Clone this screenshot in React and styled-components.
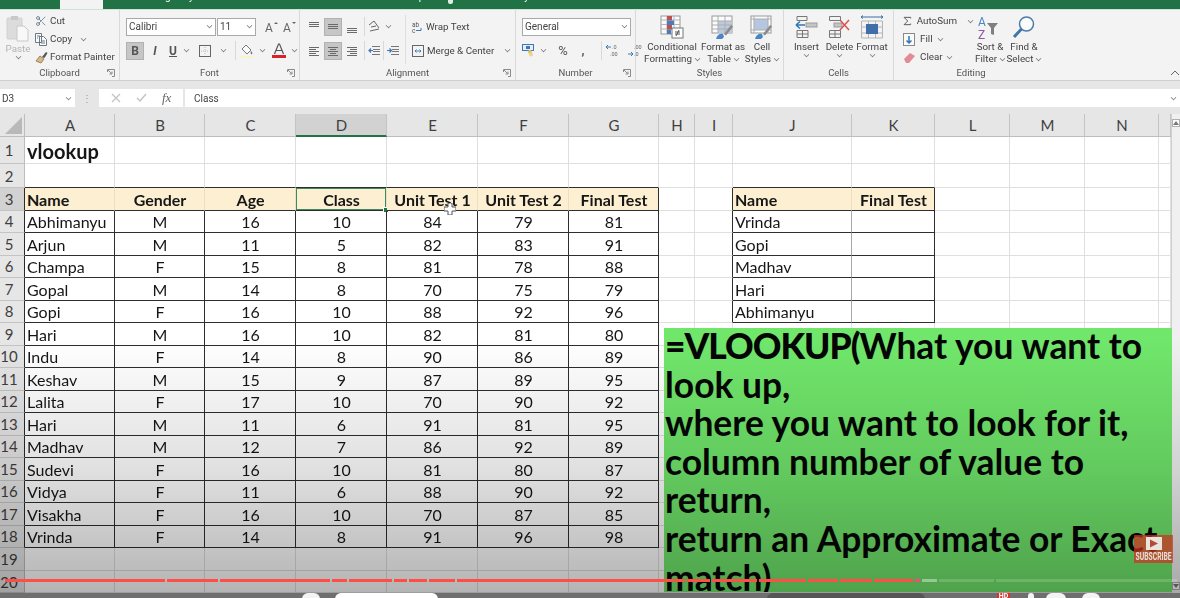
import React from "react";
import styled, { createGlobalStyle } from "styled-components";
import { Scissors } from "lucide-react";

const GlobalStyle = createGlobalStyle`
	html, body {
		margin: 0;
		padding: 0;
		background: #ffffff;
		overflow: hidden;
	}
`;

const Page = styled.div`
	position: relative;
	width: 1180px;
	height: 598px;
	overflow: hidden;
	font-family: Roboto, "Liberation Sans", sans-serif;
	color: #444444;
	filter: blur(0.35px);
`;

/* green title strip, video crop cuts the top of it */
const TabBar = styled.div`
	height: 9px;
	background: #217346;
	display: flex;
	align-items: flex-end;
	overflow: hidden;
	padding-left: 10px;
	font-size: 10px;
	line-height: 14px;
	color: #ffffff;
`;

const Tab = styled.div`
	flex: none;
	margin-right: ${(p) => p.$gap || 16}px;
	padding-bottom: 5px;
	white-space: nowrap;
`;

const ActiveTab = styled(Tab)`
	margin: 0 9px 0 18px;
	padding: 0 8px 5px;
	background: #f3f3f3;
	color: #217346;
`;

const ShareTab = styled(Tab)`
	margin-left: auto;
	margin-right: 12px;
`;

const TabGlyph = styled.div`
	flex: none;
	width: 5px;
	height: 4px;
	margin: 0 ${(p) => p.$mr}px 5px 0;
	background: #dfeee5;
	border-radius: 0 0 2px 2px;
`;

const Ribbon = styled.div`
	height: 71px;
	background: #f3f3f3;
	border-top: 1px solid #cfe3d6;
	box-sizing: border-box;
	display: flex;
	position: relative;
	font-size: 9.8px;
	line-height: 12px;
`;

const Group = styled.div`
	flex: none;
	width: ${(p) => p.$w}px;
	box-sizing: border-box;
	display: flex;
	flex-direction: column;
	border-right: ${(p) => (p.$last ? "none" : "1px solid #d9d9d9")};
`;

const GroupBody = styled.div`
	flex: 1;
	display: flex;
	min-height: 0;
	padding-left: ${(p) => p.$pl || 0}px;
`;

const GroupLabel = styled.div`
	position: relative;
	height: 13px;
	margin-bottom: 1px;
	line-height: 13px;
	text-align: center;
	font-size: 9.5px;
	color: #555555;
`;

const Launcher = styled.svg`
	position: absolute;
	right: 4px;
	top: 3px;
`;

const Stack = styled.div`
	flex: none;
	width: ${(p) => (p.$w ? `${p.$w}px` : "auto")};
	display: flex;
	flex-direction: column;
	padding-top: ${(p) => p.$pt ?? 2}px;
`;

const SmallRow = styled.div`
	height: 18px;
	display: flex;
	align-items: center;
	gap: ${(p) => p.$gap ?? 4}px;
	white-space: nowrap;
`;

const ToolRows = styled.div`
	flex: none;
	width: ${(p) => (p.$w ? `${p.$w}px` : "auto")};
	display: flex;
	flex-direction: column;
	gap: 5px;
	padding-top: 7px;
`;

const ToolRow = styled.div`
	height: 19px;
	display: flex;
	align-items: center;
	gap: ${(p) => p.$gap ?? 0}px;
	white-space: nowrap;
`;

const Paste = styled.div`
	width: 30px;
	display: flex;
	flex-direction: column;
	align-items: center;
	padding-top: 5px;
	color: #b5b5b5;
	margin-right: 2px;
`;

const Select = styled.div`
	width: ${(p) => p.$w}px;
	height: 18px;
	margin-right: ${(p) => p.$mr || 0}px;
	box-sizing: border-box;
	background: #ffffff;
	border: 1px solid #a9a9a9;
	display: flex;
	align-items: center;
	justify-content: space-between;
	padding: 0 3px 0 2px;
	font-size: 10px;
`;

const IconButton = styled.div`
	flex: none;
	width: ${(p) => p.$w || 18}px;
	height: 18px;
	margin-right: ${(p) => p.$mr || 0}px;
	display: flex;
	align-items: center;
	justify-content: center;
	font-size: ${(p) => p.$size || 12}px;
	font-weight: ${(p) => (p.$bold ? 700 : 400)};
	font-style: ${(p) => (p.$italic ? "italic" : "normal")};
	text-decoration: ${(p) => (p.$under ? "underline" : "none")};
	color: #555555;
	background: ${(p) => (p.$on ? "#c6c6c6" : "transparent")};
	box-shadow: ${(p) => (p.$on ? "inset 0 0 0 1px #b2b2b2" : "none")};
`;

const Divider = styled.div`
	width: 1px;
	height: ${(p) => p.$h || 19}px;
	background: #d9d9d9;
	flex: none;
	margin: 0 ${(p) => p.$m || 5}px;
`;

const ThinDivider = styled.div`
	width: 1px;
	flex: none;
	align-self: stretch;
	margin: 5px ${(p) => p.$mr || 6}px 2px ${(p) => p.$ml || 0}px;
	background: #dedede;
`;

const BigButton = styled.div`
	flex: none;
	width: ${(p) => p.$w}px;
	display: flex;
	flex-direction: column;
	align-items: center;
	text-align: center;
	padding-top: 5px;
	white-space: nowrap;
`;

const BigIcon = styled.div`
	height: 26px;
	display: flex;
	align-items: flex-start;
	justify-content: center;
`;

const Caret = styled.span`
	display: inline-block;
	margin-left: ${(p) => p.$ml ?? 3}px;
	margin-right: ${(p) => p.$mr || 0}px;
	width: 4px;
	height: 4px;
	flex: none;
	border-right: 1px solid #777777;
	border-bottom: 1px solid #777777;
	transform: translateY(-1px) rotate(45deg) scale(0.8);
`;

const Collapse = styled.svg`
	position: absolute;
	right: 0;
	bottom: 3px;
`;

const FormulaStrip = styled.div`
	height: 34px;
	box-sizing: border-box;
	padding-top: 8px;
	background: #e6e6e6;
	border-top: 1px solid #cfcfcf;
	display: flex;
	align-items: flex-start;
	gap: 2px;
	font-size: 10px;
`;

const NameBox = styled.div`
	width: 75px;
	height: 18px;
	box-sizing: border-box;
	padding: 0 4px 0 2px;
	background: #ffffff;
	display: flex;
	align-items: center;
	justify-content: space-between;
`;

const Grip = styled.div`
	width: 20px;
	height: 18px;
	display: flex;
	align-items: center;
	justify-content: center;
	color: #9a9a9a;
	font-size: 10px;
`;

const FormulaTools = styled.div`
	width: 84px;
	height: 18px;
	background: #ffffff;
	display: flex;
	align-items: center;
	justify-content: space-around;
	padding: 0 4px;
	box-sizing: border-box;
	color: #666666;
`;

const Fx = styled.span`
	font-family: "Liberation Serif", serif;
	font-style: italic;
	font-size: 13px;
`;

const FormulaInput = styled.div`
	flex: 1;
	height: 18px;
	background: #ffffff;
	display: flex;
	align-items: center;
	justify-content: space-between;
	padding: 0 4px 0 9px;
`;

const Sheet = styled.div`
	display: grid;
	grid-template-columns: 25px 90px 90px 91px 91px 91px 91px 90px 36px 38px 119px 83px 75px 75px 74px 12px 9px;
	grid-template-rows: 23px 27px 24px repeat(16, 22.5px) 23px 22px;
	font-family: Lato, "Liberation Sans", sans-serif;
	color: #161616;
	background: #ffffff;
`;

const Corner = styled.div`
	background: #e6e6e6;
	border-bottom: 1px solid #bdbdbd;
	border-right: 1px solid #bdbdbd;
	box-sizing: border-box;
	display: flex;
	align-items: flex-end;
	justify-content: flex-end;
	padding: 0 2px 2px 0;
`;

const ColHead = styled.div`
	box-sizing: border-box;
	display: flex;
	align-items: center;
	justify-content: center;
	padding-left: 1px;
	font-size: 15px;
	color: #3f3f3f;
	background: ${(p) => (p.$on ? "#d2d2d2" : "#e6e6e6")};
	border-right: 1px solid #c4c4c4;
	border-bottom: ${(p) => (p.$on ? "2px solid #217346" : "1px solid #bdbdbd")};
`;

const RowHead = styled.div`
	box-sizing: border-box;
	display: flex;
	align-items: center;
	justify-content: center;
	padding-right: 6px;
	font-size: 15px;
	color: #3f3f3f;
	background: ${(p) => (p.$on ? "#d2d2d2" : "#e6e6e6")};
	border-bottom: 1px solid #c4c4c4;
	border-right: 1px solid ${(p) => (p.$dark ? "#2b2b2b" : "#bdbdbd")};
`;

const lineColor = { dark: "#2e2e2e", mid: "#a8a8a8", soft: "#eadfc0", grid: "#dfdfdf" };

const Cell = styled.div`
	position: relative;
	box-sizing: border-box;
	min-width: 0;
	display: flex;
	align-items: center;
	justify-content: ${(p) => (p.$center ? "center" : "flex-start")};
	padding-left: ${(p) => (p.$center ? 1 : 2)}px;
	padding-top: 1px;
	font-size: ${(p) => (p.$title ? 20 : 16)}px;
	font-weight: ${(p) => (p.$bold ? 700 : 400)};
	white-space: nowrap;
	background: ${(p) => (p.$fill ? "#fdf0d2" : "transparent")};
	border-right: 1px solid ${(p) => lineColor[p.$right]};
	border-bottom: 1px solid ${(p) => lineColor[p.$bottom]};
	box-shadow: ${(p) => (p.$selected ? "inset 0 0 0 1px #3e8a60" : "none")};

	&::after {
		content: "";
		display: ${(p) => (p.$selected ? "block" : "none")};
		position: absolute;
		right: -3px;
		bottom: -3px;
		width: 4px;
		height: 4px;
		background: #217346;
		border: 1px solid #ffffff;
	}
`;

const Scrollbar = styled.div`
	grid-column: 17;
	grid-row: 1 / -1;
	background: #f0f0f0;
	border-left: 1px solid #d0d0d0;
	display: flex;
	flex-direction: column;
	justify-content: space-between;
	align-items: center;
	padding: 5px 0 3px;
	box-sizing: border-box;
`;

const ArrowBox = styled.div`
	width: 8px;
	height: 8px;
	display: flex;
	align-items: center;
	justify-content: center;
	background: #ffffff;
	border: 1px solid #b0b0b0;
	box-sizing: border-box;
`;

const PlayerBottom = styled.div`
	position: relative;
	z-index: 1;
	height: 5px;
	background: #6f6f6f;
	display: flex;
	align-items: flex-start;
	overflow: hidden;
`;

const Knob = styled.div`
	flex: none;
	width: ${(p) => p.$w}px;
	height: 12px;
	margin-left: ${(p) => p.$ml}px;
	border-radius: 6px 6px 0 0;
	background: ${(p) => p.$bg};
`;

const SheetTabText = styled.div`
	flex: none;
	width: 300px;
`;

/* things that float over the grid */
const Shade = styled.div`
	position: absolute;
	left: 0;
	right: 0;
	top: 340px;
	bottom: 0;
	pointer-events: none;
	background: linear-gradient(to bottom, rgba(0, 0, 0, 0) 0%, rgba(0, 0, 0, 0.12) 50%, rgba(0, 0, 0, 0.3) 100%);
`;

const TextBox = styled.div`
	position: absolute;
	left: 664px;
	top: 328px;
	width: 508px;
	height: 264px;
	box-sizing: border-box;
	overflow: hidden;
	background: #70e66b;
	color: #050505;
	font-family: Lato, "Liberation Sans", sans-serif;
	font-weight: 700;
	font-size: 35.4px;
	line-height: 35px;
	padding-left: 1px;
	white-space: nowrap;
`;

const BoxLine = styled.div`
	height: 38.6px;
`;

const Heavy = styled.span`
	font-weight: 900;
	letter-spacing: -1px;
`;

const Progress = styled.div`
	position: absolute;
	z-index: 2;
	left: 5px;
	top: 579px;
	width: 1170px;
	height: 3px;
	display: flex;
	gap: 2px;
`;

const Segment = styled.div`
	flex: none;
	height: 3px;
	background: ${(p) => p.$c};
`;

const Subscribe = styled.div`
	position: absolute;
	z-index: 2;
	left: 1134px;
	top: 535px;
	width: 39px;
	height: 28px;
	box-sizing: border-box;
	background: rgba(205, 50, 35, 0.72);
	display: flex;
	flex-direction: column;
	align-items: center;
	padding-top: 2px;
	color: #e8e0d8;
	font-family: Roboto, "Liberation Sans", sans-serif;
	font-weight: 700;
	font-size: 8.5px;
	line-height: 12px;
`;

const SubscribeText = styled.span`
	display: block;
	transform: scale(0.8, 1.2);
`;

const HdBadge = styled.div`
	flex: none;
	margin-left: 72px;
	width: 13px;
	height: 5px;
	background: #d8342c;
	color: #ffffff;
	font: 700 7px/7px Roboto, sans-serif;
	text-align: center;
`;

const Pointer = styled.svg`
	position: absolute;
	left: 444px;
	top: 203px;
`;

function Launch() {
	return (
		<Launcher width="8" height="8" viewBox="0 0 8 8" fill="none" stroke="#8a8a8a">
			<path d="M.5 3V.5h7v7H5M1 1l4 4M5 2.5V5H2.5" />
		</Launcher>
	);
}

function PasteIcon() {
	return (
		<svg width="24" height="28" viewBox="0 0 24 28">
			<rect x="1" y="3" width="15" height="21" rx="1" fill="#dcdcdc" stroke="#d0d0d0" />
			<rect x="5" y="1" width="7" height="4" fill="#c9c9c9" />
			<path d="M11 11h7l4 4v11H11z" fill="#f8f8f8" stroke="#c8c8c8" />
		</svg>
	);
}

function CopyIcon() {
	return (
		<svg width="12" height="13" viewBox="0 0 12 13" fill="#fafafa" stroke="#6d7a86">
			<path d="M.5.5h6v9h-6zM4.5 3.5h4l3 3v6h-7z" />
			<path d="M2 3h3M2 5h1M6 8h4M6 10h4" />
		</svg>
	);
}

function PainterIcon() {
	return (
		<svg width="13" height="13" viewBox="0 0 13 13">
			<path d="M1 10l4-5 4 3-3 4z" fill="#d8b98a" stroke="#9a8460" />
			<path d="M7 6l4-5 1.5 1-3 5z" fill="#555555" />
		</svg>
	);
}

function FontSizeIcon({ down }) {
	return (
		<svg width="15" height="14" viewBox="0 0 15 14">
			<text x="1" y="12" fontFamily="Roboto" fontSize="12" fill="#666666">A</text>
			<path d={down ? "M10 2h4l-2 2z" : "M10 4h4l-2-2z"} fill="#666666" />
		</svg>
	);
}

function BordersIcon() {
	return (
		<svg width="12" height="12" viewBox="0 0 12 12" fill="none">
			<rect x=".5" y=".5" width="11" height="11" stroke="#666666" />
			<path d="M6 2v8M2 6h8" stroke="#bbbbbb" strokeDasharray="1 1" />
		</svg>
	);
}

function FillIcon() {
	return (
		<svg width="14" height="15" viewBox="0 0 14 15">
			<path d="M2 6l4-4 5 5-4 4z" fill="#fbfbfb" stroke="#777777" />
			<path d="M11 8c1 1 2 2 1 3s-2-1-1-3z" fill="#777777" />
			<rect x="1" y="13" width="12" height="2" fill="#fbf3c8" />
		</svg>
	);
}

function FontColorIcon() {
	return (
		<svg width="14" height="15" viewBox="0 0 14 15">
			<path d="M2.5 11L6.5 1h1l4 10M4 7.500h6" fill="none" stroke="#555555" strokeWidth="1.2" />
			<rect x="0" y="12" width="14" height="3" fill="#d8232a" />
		</svg>
	);
}

function AlignLines({ rows }) {
	return (
		<svg width="12" height="14" viewBox="0 0 12 14" stroke="#6a6a6a">
			{rows.map(([y, a, b]) => (
				<path key={y} d={`M${a} ${y}.5H${b}`} />
			))}
		</svg>
	);
}

const topLines = [[2, 1, 11], [4, 1, 11], [6, 1, 11]];
const midLines = [[4, 1, 11], [6, 1, 11], [8, 1, 11]];
const botLines = [[8, 1, 11], [10, 1, 11], [12, 1, 11]];
const leftLines = [[3, 1, 11], [5, 1, 8], [7, 1, 11], [9, 1, 8], [11, 1, 11]];
const centerLines = [[3, 1, 11], [5, 3, 9], [7, 1, 11], [9, 3, 9], [11, 1, 11]];
const rightLines = [[3, 1, 11], [5, 4, 11], [7, 1, 11], [9, 4, 11], [11, 1, 11]];

function OrientIcon() {
	return (
		<svg width="13" height="13" viewBox="0 0 13 13" fill="none" stroke="#666666">
			<path d="M1 5l5-4 5 7M3 7l5-1M2 11l9-2" />
		</svg>
	);
}

function IndentIcon({ right }) {
	return (
		<svg width="12" height="11" viewBox="0 0 12 11" fill="none" stroke="#777777">
			<path d="M4 1.500h8M5 4.500h7M5 6.500h7M4 9.500h8" />
			<path d={right ? "M0 5.500h4M2.500 3.500l2 2-2 2" : "M1 5.500h4M3 3.500l-2 2 2 2"} stroke="#3b78b8" strokeWidth="1.2" />
		</svg>
	);
}

function WrapIcon() {
	return (
		<svg width="10" height="12" viewBox="0 0 10 12">
			<text x="0" y="5.500" fontFamily="Roboto" fontSize="6.5" fill="#555555">ab</text>
			<text x="0" y="11.500" fontFamily="Roboto" fontSize="6.5" fill="#555555">c</text>
			<path d="M4 9.500h5V7" fill="none" stroke="#3b78b8" />
		</svg>
	);
}

function MergeIcon() {
	return (
		<svg width="12" height="12" viewBox="0 0 12 12" fill="none" stroke="#666666">
			<rect x=".5" y=".5" width="11" height="11" />
			<path d="M3 6h6M3 6l1.500-1.500M3 6l1.500 1.500M9 6L7.500 4.500M9 6L7.500 7.500" stroke="#4a7ebb" />
		</svg>
	);
}

function CurrencyIcon() {
	return (
		<svg width="13" height="13" viewBox="0 0 13 13">
			<rect x=".5" y=".5" width="11" height="6" fill="#e8eef6" stroke="#3b78b8" />
			<rect x="4" y="2" width="4" height="3" fill="#3b78b8" />
			<circle cx="8" cy="8" r="2" fill="#e8c36a" />
			<circle cx="9" cy="10.500" r="2" fill="#f0d48f" />
		</svg>
	);
}

function DecimalIcon({ inc }) {
	return (
		<svg width="14" height="13" viewBox="0 0 14 13" fontFamily="Roboto" fontSize="5.5" fill="#666666">
			<text x="6" y="5">{inc ? ".0" : ".00"}</text>
			<text x={inc ? 4 : 6} y="12">{inc ? ".00" : ".0"}</text>
			<path d={inc ? "M0 3h5M2 1L0 3l2 2" : "M0 10h5M3 8l2 2-2 2"} fill="none" stroke="#3b78b8" />
		</svg>
	);
}

function ConditionalIcon() {
	return (
		<svg width="24" height="24" viewBox="0 0 24 24">
			<rect x="1" y="1" width="19" height="18" fill="#fafafa" stroke="#9a9a9a" />
			<path d="M1 5h19M1 9.500h19M1 14h19M7 1v18M14 1v18" stroke="#b5b5b5" />
			<rect x="7" y="1" width="5" height="4.500" fill="#c0504d" />
			<rect x="7" y="5.500" width="7" height="4.500" fill="#4a7ebb" />
			<rect x="7" y="10" width="5" height="4.500" fill="#c0504d" />
			<rect x="7" y="14.500" width="4" height="4.500" fill="#4a7ebb" />
			<rect x="12" y="13" width="11" height="10" fill="#ffffff" stroke="#777777" />
			<path d="M15 19h5M15 17h5M19 15l-3 6" stroke="#555555" fill="none" />
		</svg>
	);
}

function TableStyleIcon({ cell }) {
	return (
		<svg width="24" height="26" viewBox="0 0 24 26">
			<rect x="1" y="1" width="20" height="17" fill="#fbfbfb" stroke="#9a9a9a" />
			{cell ? (
				<rect x="4" y="4" width="14" height="11" fill="#b4c6e0" />
			) : (
				<path d="M7 6h14v12H7z" fill="#bccbdf" />
			)}
			<path d={cell ? "M1 4h20M1 15h20M4 1v17M18 1v17" : "M1 6h20M1 10h20M1 14h20M7 1v17M14 1v17"} stroke="#adadad" fill="none" />
			<path d="M5 24c1-4 4-6 7-5l1 3-2 2z" fill="#4a86c5" />
			<path d="M13 19l7-9 2 1.500-7 9z" fill="#8a8a8a" />
		</svg>
	);
}

function InsertIcon() {
	return (
		<svg width="23" height="24" viewBox="0 0 23 24" fill="none">
			<path d="M2 1.500h10v4H2zM2 15.500h11v7H2zM7.500 15.500v7M2 19h11" stroke="#777777" />
			<rect x="11" y="8" width="11" height="4" fill="#c4c4c4" stroke="#9c9c9c" />
			<path d="M1 10h9M1 10l4-3.500M1 10l4 3.500" stroke="#2e75b6" strokeWidth="1.500" />
		</svg>
	);
}

function DeleteIcon() {
	return (
		<svg width="23" height="24" viewBox="0 0 23 24" fill="none">
			<path d="M1.500 1.500h11v4h-11zM1.500 15.500h11v7h-11zM7 15.500v7M1.500 19h11" stroke="#777777" />
			<rect x="6" y="8" width="8" height="4" fill="#c4c4c4" stroke="#9c9c9c" />
			<path d="M12 5l9 10M21 5l-9 10" stroke="#d9534f" strokeWidth="1.500" />
		</svg>
	);
}

function FormatIcon() {
	return (
		<svg width="24" height="26" viewBox="0 0 24 26" fill="none">
			<path d="M1 2h22M1 2l2-1.500M1 2l2 1.500M23 2l-2-1.500M23 2l-2 1.500" stroke="#3b6ea5" />
			<path d="M1.500 6h21v17h-21zM1.500 12h21M1.500 18h21M8.500 6v17M15.500 6v17" stroke="#b5b5b5" />
			<rect x="6" y="9" width="12" height="10" fill="#3f6ea8" />
		</svg>
	);
}

function FillDownIcon() {
	return (
		<svg width="12" height="13" viewBox="0 0 12 13" fill="none">
			<rect x=".5" y=".5" width="11" height="12" fill="#fafafa" stroke="#8a8a8a" />
			<path d="M6 3v7M3.500 7.500L6 10l2.500-2.500" stroke="#2e75b6" strokeWidth="1.500" />
		</svg>
	);
}

function EraserIcon() {
	return (
		<svg width="13" height="13" viewBox="0 0 13 13">
			<path d="M1 8l6-6 5 3-6 7H3z" fill="#e28b95" />
		</svg>
	);
}

function SigmaIcon() {
	return (
		<svg width="12" height="12" viewBox="0 0 12 12" fill="none" stroke="#555555" strokeWidth="1.300">
			<path d="M10.500 2.500V1h-9l5 5-5 5h9V9.500" />
		</svg>
	);
}

function SortIcon() {
	return (
		<svg width="26" height="26" viewBox="0 0 26 26" fontFamily="Roboto" fontSize="12">
			<text x="1" y="11" fill="#4a86c5">A</text>
			<text x="1" y="24" fill="#8e5aa6">Z</text>
			<path d="M10 8h11l-4 5v7l-3-1v-6z" fill="#7f7f7f" />
		</svg>
	);
}

function FindIcon() {
	return (
		<svg width="24" height="26" viewBox="0 0 24 26" fill="none">
			<circle cx="14.500" cy="9" r="7" fill="#fbfbfb" stroke="#4a7bab" strokeWidth="1.500" />
			<path d="M9.500 14L2 22" stroke="#3f74a8" strokeWidth="3" />
		</svg>
	);
}

const columnLetters = ["A", "B", "C", "D", "E", "F", "G", "H", "I", "J", "K", "L", "M", "N", ""];

const students = [
	["Abhimanyu", "M", 16, 10, 84, 79, 81],
	["Arjun", "M", 11, 5, 82, 83, 91],
	["Champa", "F", 15, 8, 81, 78, 88],
	["Gopal", "M", 14, 8, 70, 75, 79],
	["Gopi", "F", 16, 10, 88, 92, 96],
	["Hari", "M", 16, 10, 82, 81, 80],
	["Indu", "F", 14, 8, 90, 86, 89],
	["Keshav", "M", 15, 9, 87, 89, 95],
	["Lalita", "F", 17, 10, 70, 90, 92],
	["Hari", "M", 11, 6, 91, 81, 95],
	["Madhav", "M", 12, 7, 86, 92, 89],
	["Sudevi", "F", 16, 10, 81, 80, 87],
	["Vidya", "F", 11, 6, 88, 90, 92],
	["Visakha", "F", 16, 10, 70, 87, 85],
	["Vrinda", "F", 14, 8, 91, 96, 98],
];

const mainHeader = ["Name", "Gender", "Age", "Class", "Unit Test 1", "Unit Test 2", "Final Test"];
const lookupNames = ["Vrinda", "Gopi", "Madhav", "Hari", "Abhimanyu"];

function cellFor(row, col) {
	const inMain = col <= 6 && row >= 3 && row <= 18;
	const inSide = (col === 9 || col === 10) && row >= 3 && row <= 8;
	const above = row === 2 && (col <= 6 || col === 9 || col === 10);

	let value = "";
	if (row === 1 && col === 0) value = "vlookup";
	if (inMain) value = row === 3 ? mainHeader[col] : students[row - 4][col];
	if (inSide && col === 9) value = row === 3 ? "Name" : lookupNames[row - 4];
	if (inSide && col === 10 && row === 3) value = "Final Test";

	let right = "grid";
	if (inMain || inSide) right = row === 3 ? "soft" : "dark";
	if (inSide && col === 9 && row > 3) right = "mid";
	if ((col === 6 || col === 10) && (inMain || inSide)) right = "dark";
	if (col === 8 && row >= 3 && row <= 8) right = "dark";

	return {
		value,
		right,
		bottom: inMain || inSide || above ? "dark" : "grid",
		bold: row === 3 ? inMain || inSide : row === 1 && col === 0,
		fill: row === 3 && (inMain || inSide),
		center: (inMain && col > 0) || (inSide && col === 10),
		title: row === 1 && col === 0,
		selected: row === 3 && col === 3,
	};
}

const rowNumbers = Array.from({ length: 20 }, (_, i) => i + 1);

// red part of the player bar, widths follow the chapter marks
const played = [160, 51, 110, 15, 43, 13, 18, 26, 228, 23, 45, 47, 30, 32, 39];
const rest = [
	[5, "#f7487a"],
	[15, "rgba(255,255,255,0.4)"],
	[55, "rgba(255,255,255,0.16)"],
	[181, "rgba(255,255,255,0.16)"],
];

function App() {
	return (
		<Page>
			<GlobalStyle />
			<TabBar>
				<Tab>File</Tab>
				<ActiveTab>Home</ActiveTab>
				<Tab>Insert</Tab>
				<Tab>Page Layout</Tab>
				<Tab>Formulas</Tab>
				<Tab>Data</Tab>
				<Tab>Review</Tab>
				<Tab>View</Tab>
				<Tab $gap={24}>Help</Tab>
				<TabGlyph $mr={12} />
				<Tab>Tell me what you want to do</Tab>
				<ShareTab>Share</ShareTab>
			</TabBar>

			<Ribbon>
				<Group $w={120}>
					<GroupBody $pl={3}>
						<Paste>
							<PasteIcon />
							<span>Paste</span>
							<Caret $ml={0} />
						</Paste>
						<Stack>
							<SmallRow $gap={3}>
								<Scissors size={12} color="#5a6f85" strokeWidth={1.5} />
								<span>Cut</span>
							</SmallRow>
							<SmallRow $gap={3}>
								<CopyIcon />
								<span>Copy</span>
								<Caret $ml={6} />
							</SmallRow>
							<SmallRow $gap={2}>
								<PainterIcon />
								<span>Format Painter</span>
							</SmallRow>
						</Stack>
					</GroupBody>
					<GroupLabel>
						Clipboard
						<Launch />
					</GroupLabel>
				</Group>

				<Group $w={180}>
					<GroupBody $pl={6}>
						<ToolRows>
							<ToolRow>
								<Select $w={90} $mr={1}>
									Calibri
									<Caret />
								</Select>
								<Select $w={39} $mr={6}>
									11
									<Caret />
								</Select>
								<IconButton $w={18}>
									<FontSizeIcon />
								</IconButton>
								<IconButton $w={18}>
									<FontSizeIcon down />
								</IconButton>
							</ToolRow>
							<ToolRow>
								<IconButton $on $bold $w={18} $mr={4}>B</IconButton>
								<IconButton $italic $bold $w={14} $mr={4}>I</IconButton>
								<IconButton $under $bold $w={14}>U</IconButton>
								<Caret $ml={4} $mr={10} />
								<BordersIcon />
								<Caret $ml={10} $mr={8} />
								<Divider $m={1} />
								<IconButton $w={20}>
									<FillIcon />
								</IconButton>
								<Caret $ml={3} $mr={7} />
								<FontColorIcon />
								<Caret $ml={6} />
							</ToolRow>
						</ToolRows>
					</GroupBody>
					<GroupLabel>
						Font
						<Launch />
					</GroupLabel>
				</Group>

				<Group $w={216}>
					<GroupBody $pl={5}>
						<ToolRows $w={100}>
							<ToolRow $gap={1}>
								<IconButton><AlignLines rows={topLines} /></IconButton>
								<IconButton $on><AlignLines rows={midLines} /></IconButton>
								<IconButton><AlignLines rows={botLines} /></IconButton>
								<Divider $m={2} />
								<OrientIcon />
								<Caret $ml={4} />
							</ToolRow>
							<ToolRow $gap={1}>
								<IconButton><AlignLines rows={leftLines} /></IconButton>
								<IconButton $on><AlignLines rows={centerLines} /></IconButton>
								<IconButton><AlignLines rows={rightLines} /></IconButton>
								<Divider $m={2} />
								<IndentIcon />
								<Divider $m={2} />
								<IndentIcon right />
							</ToolRow>
						</ToolRows>
						<ThinDivider $mr={6} />
						<ToolRows>
							<ToolRow $gap={4}>
								<WrapIcon />
								<span>Wrap Text</span>
							</ToolRow>
							<ToolRow $gap={3}>
								<MergeIcon />
								<span>Merge &amp; Center</span>
								<Caret $ml={8} />
							</ToolRow>
						</ToolRows>
					</GroupBody>
					<GroupLabel>
						Alignment
						<Launch />
					</GroupLabel>
				</Group>

				<Group $w={120}>
					<GroupBody $pl={6}>
						<ToolRows>
							<ToolRow>
								<Select $w={109}>
									General
									<Caret />
								</Select>
							</ToolRow>
							<ToolRow>
								<CurrencyIcon />
								<Caret $ml={6} $mr={10} />
								<IconButton $w={14} $size={13} $mr={6}>%</IconButton>
								<IconButton $w={14} $bold $mr={7}>,</IconButton>
								<Divider $m={4} />
								<DecimalIcon inc />
								<IconButton $w={8} />
								<DecimalIcon />
							</ToolRow>
						</ToolRows>
					</GroupBody>
					<GroupLabel>
						Number
						<Launch />
					</GroupLabel>
				</Group>

				<Group $w={148}>
					<GroupBody $pl={9}>
						<BigButton $w={54}>
							<BigIcon><ConditionalIcon /></BigIcon>
							<span>Conditional</span>
							<span>Formatting<Caret /></span>
						</BigButton>
						<BigButton $w={48}>
							<BigIcon><TableStyleIcon /></BigIcon>
							<span>Format as</span>
							<span>Table<Caret /></span>
						</BigButton>
						<BigButton $w={30}>
							<BigIcon><TableStyleIcon cell /></BigIcon>
							<span>Cell</span>
							<span>Styles<Caret /></span>
						</BigButton>
					</GroupBody>
					<GroupLabel>Styles</GroupLabel>
				</Group>

				<Group $w={110}>
					<GroupBody $pl={6}>
						<BigButton $w={33}>
							<BigIcon><InsertIcon /></BigIcon>
							<span>Insert</span>
							<Caret $ml={0} />
						</BigButton>
						<BigButton $w={33}>
							<BigIcon><DeleteIcon /></BigIcon>
							<span>Delete</span>
							<Caret $ml={0} />
						</BigButton>
						<BigButton $w={32}>
							<BigIcon><FormatIcon /></BigIcon>
							<span>Format</span>
							<Caret $ml={0} />
						</BigButton>
					</GroupBody>
					<GroupLabel>Cells</GroupLabel>
				</Group>

				<Group $w={154} $last>
					<GroupBody $pl={9}>
						<Stack $w={70}>
							<SmallRow $gap={5}>
								<SigmaIcon />
								<span>AutoSum</span>
								<Caret $ml={6} />
							</SmallRow>
							<SmallRow $gap={5}>
								<FillDownIcon />
								<span>Fill</span>
								<Caret $ml={0} />
							</SmallRow>
							<SmallRow $gap={4}>
								<EraserIcon />
								<span>Clear</span>
								<Caret $ml={0} />
							</SmallRow>
						</Stack>
						<BigButton $w={34}>
							<BigIcon><SortIcon /></BigIcon>
							<span>Sort &amp;</span>
							<span>Filter<Caret /></span>
						</BigButton>
						<BigButton $w={34}>
							<BigIcon><FindIcon /></BigIcon>
							<span>Find &amp;</span>
							<span>Select<Caret /></span>
						</BigButton>
					</GroupBody>
					<GroupLabel>Editing</GroupLabel>
				</Group>

				<Collapse width="10" height="8" viewBox="0 0 10 8" fill="none" stroke="#666666">
					<path d="M1 6l4-4 4 4" />
				</Collapse>
			</Ribbon>

			<FormulaStrip>
				<NameBox>
					D3
					<Caret />
				</NameBox>
				<Grip>⋮</Grip>
				<FormulaTools>
					<svg width="10" height="10" viewBox="0 0 10 10" stroke="#c4c4c4" strokeWidth="1.300">
						<path d="M1 1l8 8M9 1l-8 8" />
					</svg>
					<svg width="11" height="10" viewBox="0 0 11 10" fill="none" stroke="#c4c4c4" strokeWidth="1.500">
						<path d="M1 5l3 3 6-7" />
					</svg>
					<Fx>fx</Fx>
				</FormulaTools>
				<FormulaInput>
					Class
					<Caret />
				</FormulaInput>
			</FormulaStrip>

			<Sheet>
				<Corner>
					<svg width="17" height="17" viewBox="0 0 17 17">
						<path d="M17 0v17H0z" fill="#b9b9b9" />
					</svg>
				</Corner>
				{columnLetters.map((letter, i) => (
					<ColHead key={i} $on={letter === "D"}>{letter}</ColHead>
				))}
				<Scrollbar>
					<ArrowBox>
						<svg width="6" height="4" viewBox="0 0 6 4"><path d="M3 0l3 4H0z" fill="#777777" /></svg>
					</ArrowBox>
					<ArrowBox>
						<svg width="6" height="4" viewBox="0 0 6 4"><path d="M3 4l3-4H0z" fill="#777777" /></svg>
					</ArrowBox>
				</Scrollbar>
				{rowNumbers.map((row) => (
					<React.Fragment key={row}>
						<RowHead $on={row === 3} $dark={row >= 3 && row <= 18}>{row}</RowHead>
						{columnLetters.map((_, col) => {
							const c = cellFor(row, col);
							return (
								<Cell
									key={col}
									$right={c.right}
									$bottom={c.bottom}
									$bold={c.bold}
									$fill={c.fill}
									$center={c.center}
									$title={c.title}
									$selected={c.selected}
								>
									{c.value}
								</Cell>
							);
						})}
					</React.Fragment>
				))}
			</Sheet>

			<PlayerBottom>
				<SheetTabText />
				<Knob $w={18} $ml={2} $bg="#f4f4f4" />
				<Knob $w={103} $ml={15} $bg="#ffffff" />
				<Knob $w={158} $ml={329} $bg="#565656" />
				<HdBadge>HD</HdBadge>
				<Knob $w={6} $ml={18} $bg="#f4f4f4" />
				<Knob $w={20} $ml={12} $bg="#f4f4f4" />
				<Knob $w={18} $ml={16} $bg="#f4f4f4" />
			</PlayerBottom>

			<TextBox>
				<BoxLine><Heavy>=VLOOKUP(</Heavy>What you want to</BoxLine>
				<BoxLine>look up,</BoxLine>
				<BoxLine>where you want to look for it,</BoxLine>
				<BoxLine>column number of value to</BoxLine>
				<BoxLine>return,</BoxLine>
				<BoxLine>return an Approximate or Exact</BoxLine>
				<BoxLine>match)</BoxLine>
			</TextBox>

			<Shade />

			<Progress>
				{played.map((w, i) => (
					<Segment key={i} $c="#ff4e45" style={{ width: w }} />
				))}
				{rest.map(([w, c], i) => (
					<Segment key={i} $c={c} style={{ width: w }} />
				))}
			</Progress>

			<Subscribe>
				<svg width="16" height="13" viewBox="0 0 16 13">
					<rect width="16" height="13" fill="#e9e5dc" />
					<path d="M4 2.500l8 4-8 4z" fill="#b5493a" />
				</svg>
				<SubscribeText>SUBSCRIBE</SubscribeText>
			</Subscribe>

			<Pointer width="12" height="12" viewBox="0 0 12 12">
				<path d="M4 0h4v4h4v4H8v4H4V8H0V4h4z" fill="#ffffff" stroke="#555555" />
			</Pointer>
		</Page>
	);
}

export default App;
